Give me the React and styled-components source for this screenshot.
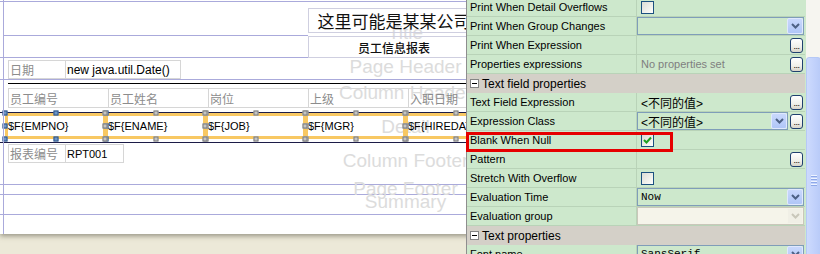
import React from 'react';
import styled, { createGlobalStyle } from 'styled-components';

const Global = createGlobalStyle`
  html, body { margin: 0; padding: 0; }
  body {
    width: 820px; height: 254px; overflow: hidden;
    background: #ece9d8;
    font-family: "Liberation Sans", Arial, sans-serif;
  }
`;

const CJK = `"Liberation Sans", "Noto Sans CJK SC", sans-serif`;

const Root = styled.div`
  position: relative;
  display: flex;
  width: 820px;
  height: 254px;
  overflow: hidden;
`;

/* ---------------- Report designer ---------------- */

const Designer = styled.div`
  flex: none;
  width: 466px;
  height: 254px;
  overflow: hidden;
  background: #ece9d8;
`;

const Page = styled.div`
  position: relative;
  width: 808px;
  height: 234px;
  background: #fff;
  display: flex;
  flex-direction: column;
  box-shadow: 0 2px 5px rgba(95, 92, 75, 0.6);
  &::before {
    content: "";
    position: absolute;
    left: 3px; top: 0; bottom: 0;
    width: 1px;
    background: #aaaadb;
    z-index: 2;
  }
`;

const Band = styled.div`
  position: relative;
  flex: none;
  box-sizing: border-box;
  height: ${p => p.$h}px;
  border-bottom: ${p => (p.$noLine ? 'none' : `1px solid ${p.$line || '#aaaadb'}`)};
`;

const BandLabel = styled.div`
  position: absolute;
  left: 3px; right: 0; top: 0; bottom: 0;
  display: flex;
  align-items: center;
  justify-content: center;
  transform: translateY(${p => -(p.$lift ?? 2)}px);
  font: 19px "Liberation Sans", Arial, sans-serif;
  color: #dcdcdc;
  white-space: nowrap;
  pointer-events: none;
`;

const Layer = styled.div`
  position: relative;
  z-index: 1;
  box-sizing: border-box;
  height: 100%;
  display: flex;
  flex-direction: ${p => p.$dir || 'row'};
  align-items: flex-start;
  padding: ${p => p.$pad || '0'};
  gap: ${p => p.$gap || 0}px;
`;

const Rule = styled.div`
  flex: none;
  width: ${p => p.$w}px;
  height: 1px;
  margin-top: ${p => p.$top || 0}px;
  background: ${p => p.$color || '#000'};
`;

const TitleCol = styled.div`
  display: flex;
  flex-direction: column;
  gap: 3px;
  padding-top: 6px;
`;

const TitleBox = styled.div`
  box-sizing: border-box;
  width: 172px;
  height: ${p => p.$h}px;
  border: 1px solid #cfcfe0;
  display: flex;
  align-items: center;
  justify-content: center;
  white-space: nowrap;
  font-family: "Noto Sans CJK SC", sans-serif;
  font-size: ${p => p.$size}px;
  font-weight: ${p => p.$weight || 400};
  color: #111;
`;

const ElemRow = styled.div`
  display: flex;
  align-items: flex-start;
`;

const Cell = styled.div`
  box-sizing: border-box;
  flex: none;
  width: ${p => p.$w}px;
  height: ${p => p.$h}px;
  margin-left: ${p => (p.$first ? 0 : -1)}px;
  border: 1px solid #d6d6d6;
  padding-left: 1px;
  display: flex;
  align-items: center;
  overflow: hidden;
  white-space: nowrap;
  font-family: ${p => (p.$latin ? '"Liberation Sans", Arial, sans-serif' : CJK)};
  font-size: ${p => p.$size || 12}px;
  color: ${p => (p.$latin ? '#000' : '#8c8c8c')};
`;

const Field = styled.div`
  position: relative;
  box-sizing: border-box;
  flex: none;
  width: 101px;
  height: 26px;
  margin-left: ${p => (p.$first ? 0 : -1)}px;
  border: 3px solid #f8c863;
  display: flex;
  align-items: center;
  white-space: nowrap;
  font: 11px "Liberation Sans", Arial, sans-serif;
  color: #000;
`;

const FieldText = styled.span`
  position: relative;
  z-index: 1;
  margin-left: 0;
`;

const Handle = styled.span`
  position: absolute;
  z-index: 2;
  width: 5px;
  height: 5px;
  box-sizing: border-box;
  border: 1px solid ${p => (p.$primary ? '#2f5488' : '#7d7d7d')};
  background: ${p => (p.$primary ? '#6d96c8' : '#c4c4c4')};
  left: ${p => p.$x};
  top: ${p => p.$y};
  transform: translate(-50%, -50%);
`;

const handleSpots = [
  ['-3px', '-3px'], ['50%', '-3px'], ['calc(100% + 3px)', '-3px'],
  ['-3px', '50%'], ['calc(100% + 3px)', '50%'],
  ['-3px', 'calc(100% + 3px)'], ['50%', 'calc(100% + 3px)'], ['calc(100% + 3px)', 'calc(100% + 3px)'],
];

const columns = ['员工编号', '员工姓名', '岗位', '上级', '入职日期'];
const fields = ['$F{EMPNO}', '$F{ENAME}', '$F{JOB}', '$F{MGR}', '$F{HIREDATE}'];

function ReportPage() {
  return (
    <Page>
      <Band $h={2} />
      <Band $h={56}>
        <BandLabel $lift={-3}>Title</BandLabel>
        <Layer $pad="0 0 0 3px">
          <Rule $w={305} $top={33} $color="#aaaadb" />
          <TitleCol>
            <TitleBox $h={25} $size={17}>这里可能是某某公司</TitleBox>
            <TitleBox $h={22} $size={12} $weight={500}>员工信息报表</TitleBox>
          </TitleCol>
        </Layer>
      </Band>
      <Band $h={22}>
        <BandLabel>Page Header</BandLabel>
        <Layer $pad="2px 0 0 8px">
          <ElemRow>
            <Cell $first $w={58} $h={19}>日期</Cell>
            <Cell $w={116} $h={19} $latin>new java.util.Date()</Cell>
          </ElemRow>
        </Layer>
      </Band>
      <Band $h={33} $line="#1c1c48">
        <BandLabel $lift={3}>Column Header</BandLabel>
        <Layer $dir="column" $gap={4} $pad="3px 0 0 8px">
          <Rule $w={800} />
          <ElemRow>
            {columns.map((c, i) => (
              <Cell key={c} $first={i === 0} $w={101} $h={20}>{c}</Cell>
            ))}
          </ElemRow>
        </Layer>
      </Band>
      <Band $h={30} $line="#1c1c48">
        <BandLabel $lift={1}>Detail</BandLabel>
        <Layer $pad="0 0 0 5px">
          <ElemRow>
            {fields.map((f, i) => (
              <Field key={f} $first={i === 0}>
                <FieldText>{f}</FieldText>
                {handleSpots.map(([x, y], k) => (
                  <Handle key={k} $x={x} $y={y} $primary={i === 0} />
                ))}
              </Field>
            ))}
          </ElemRow>
        </Layer>
      </Band>
      <Band $h={42}>
        <BandLabel $lift={3}>Column Footer</BandLabel>
        <Layer $pad="1px 0 0 8px">
          <ElemRow>
            <Cell $first $w={58} $h={19}>报表编号</Cell>
            <Cell $w={59} $h={19} $latin $size={11}>RPT001</Cell>
          </ElemRow>
        </Layer>
      </Band>
      <Band $h={10}>
        <BandLabel $lift={1}>Page Footer</BandLabel>
      </Band>
      <Band $h={20}>
        <BandLabel $lift={3}>Summary</BandLabel>
      </Band>
      <Band $h={19} $noLine />
    </Page>
  );
}

/* ---------------- Property sheet ---------------- */

const PropPanel = styled.div`
  flex: 1;
  display: flex;
  border-left: 1px solid #8e8e8e;
  background: #cde8cc;
`;

const Sheet = styled.div`
  flex: none;
  width: 338px;
  height: 254px;
  overflow: hidden;
`;

const Rows = styled.div`
  margin-top: -2px;
  display: flex;
  flex-direction: column;
`;

const Row = styled.div`
  flex: none;
  box-sizing: border-box;
  height: 19px;
  display: grid;
  grid-template-columns: 170px 1fr;
  border-bottom: 1px solid #b9d3b8;
  background: #cde8cc;
`;

const NameCell = styled.div`
  border-right: 1px solid #b9d3b8;
  padding-left: 3px;
  display: flex;
  align-items: center;
  font-size: 11px;
  color: #000;
  white-space: nowrap;
  overflow: hidden;
`;

const ValueCell = styled.div`
  display: flex;
  align-items: center;
  gap: 2px;
  padding-right: 1px;
  min-width: 0;
`;

const CategoryRow = styled.div`
  flex: none;
  box-sizing: border-box;
  height: 19px;
  display: flex;
  align-items: center;
  gap: 3px;
  padding-left: 3px;
  background: #d4d0c8;
  font-size: 12px;
  color: #000;
`;

const Toggle = styled.span`
  box-sizing: border-box;
  width: 9px;
  height: 9px;
  border: 1px solid #848484;
  background: #fff;
  position: relative;
  &::after {
    content: "";
    position: absolute;
    left: 1px; right: 1px; top: 3px;
    height: 1px;
    background: #000;
  }
`;

const ValueText = styled.span`
  flex: 1;
  padding-left: 4px;
  white-space: nowrap;
  overflow: hidden;
  font-family: ${p => (p.$mono ? '"Liberation Mono", monospace' : CJK)};
  font-size: ${p => (p.$muted ? 11 : 12)}px;
  color: ${p => (p.$muted ? '#7f7f7f' : '#000')};
`;

const Check = styled.span`
  box-sizing: border-box;
  width: 13px;
  height: 13px;
  margin-left: 4px;
  border: 1px solid #1c5180;
  background: linear-gradient(135deg, #dcdcd5 0%, #f4f4f0 70%, #fff 100%);
  display: flex;
  align-items: center;
  justify-content: center;
`;

const Combo = styled.div`
  box-sizing: border-box;
  flex: 1;
  height: 18px;
  align-self: flex-start;
  display: flex;
  align-items: stretch;
  border: 1px solid ${p => (p.$disabled ? '#c9c7ba' : '#7f9db9')};
  background: ${p => (p.$disabled ? '#f5f4ea' : 'transparent')};
  min-width: 0;
`;

const ComboText = styled.span`
  flex: 1;
  display: flex;
  align-items: center;
  padding-left: 3px;
  white-space: nowrap;
  overflow: hidden;
  font-family: ${p => (p.$mono ? '"Liberation Mono", monospace' : CJK)};
  font-size: ${p => (p.$mono ? 11 : 12)}px;
  color: #000;
`;

const DropBtn = styled.span`
  flex: none;
  width: 16px;
  box-sizing: border-box;
  border: 1px solid ${p => (p.$disabled ? '#f5f4ea' : '#e0e8fe')};
  border-radius: 2px;
  background: ${p => (p.$disabled ? '#f0efe6' : 'linear-gradient(#c9d8fd, #b0c6f7)')};
  display: flex;
  align-items: center;
  justify-content: center;
`;

const DotsBtn = styled.span`
  flex: none;
  box-sizing: border-box;
  width: 13px;
  height: 15px;
  margin-left: auto;
  margin-right: 1px;
  align-self: flex-start;
  margin-top: 2px;
  border: 1px solid #20406f;
  border-radius: 3px;
  background: linear-gradient(#ffffff, #f0f0ea 60%, #d8d4c8);
  display: flex;
  align-items: flex-end;
  justify-content: center;
  font-size: 9px;
  line-height: 9px;
  letter-spacing: -0.5px;
  color: #000;
  padding-bottom: 1px;
`;

const Scrollbar = styled.div`
  flex: none;
  width: 15px;
  margin-left: 1px;
  background: #f6f5f0;
  display: flex;
  flex-direction: column;
`;

const Thumb = styled.div`
  margin-top: 57px;
  flex: 1;
  margin-bottom: -6px;
  border: 1px solid #b6c9f6;
  border-radius: 3px;
  background: linear-gradient(90deg, #cddafd, #c1d1fb 60%, #b9cbf8);
  display: flex;
  flex-direction: column;
  align-items: center;
  padding-top: 117px;
  gap: 1px;
`;

const Grip = styled.span`
  width: 6px;
  height: 1px;
  background: #eef3ff;
  box-shadow: 0 1px 0 #8ea8e8;
  margin-bottom: 1px;
`;

const Highlight = styled.div`
  position: absolute;
  left: 466px;
  top: 132px;
  width: 207px;
  height: 20px;
  box-sizing: border-box;
  border: 3px solid #e60000;
  pointer-events: none;
  z-index: 5;
`;

const Chevron = ({ disabled }) => (
  <svg width="9" height="6" viewBox="0 0 9 6">
    <polyline points="1,1 4.5,4.5 8,1" fill="none" stroke={disabled ? '#c9c7ba' : '#4d6185'} strokeWidth="2" />
  </svg>
);

const Tick = () => (
  <svg width="9" height="8" viewBox="0 0 9 8">
    <polyline points="1,4 3.5,6.5 8,1.5" fill="none" stroke="#21a121" strokeWidth="2" />
  </svg>
);

const props = [
  { name: 'Print When Detail Overflows', v: { type: 'check' } },
  { name: 'Print When Group Changes', v: { type: 'combo', text: '' } },
  { name: 'Print When Expression', v: { type: 'dots' } },
  { name: 'Properties expressions', v: { type: 'text', text: 'No properties set', muted: true, dots: true } },
  { category: 'Text field properties' },
  { name: 'Text Field Expression', v: { type: 'text', text: '<不同的值>', dots: true } },
  { name: 'Expression Class', v: { type: 'combo', text: '<不同的值>', dots: true } },
  { name: 'Blank When Null', v: { type: 'check', checked: true } },
  { name: 'Pattern', v: { type: 'dots' } },
  { name: 'Stretch With Overflow', v: { type: 'check' } },
  { name: 'Evaluation Time', v: { type: 'combo', text: 'Now', mono: true } },
  { name: 'Evaluation group', v: { type: 'combo', text: '', disabled: true } },
  { category: 'Text properties' },
  { name: 'Font name', v: { type: 'combo', text: 'SansSerif', mono: true } },
];

function Value({ v }) {
  if (v.type === 'check') {
    return <ValueCell><Check>{v.checked && <Tick />}</Check></ValueCell>;
  }
  if (v.type === 'dots') {
    return <ValueCell><DotsBtn>...</DotsBtn></ValueCell>;
  }
  if (v.type === 'text') {
    return (
      <ValueCell>
        <ValueText $muted={v.muted}>{v.text}</ValueText>
        {v.dots && <DotsBtn>...</DotsBtn>}
      </ValueCell>
    );
  }
  return (
    <ValueCell>
      <Combo $disabled={v.disabled}>
        <ComboText $mono={v.mono}>{v.text}</ComboText>
        <DropBtn $disabled={v.disabled}><Chevron disabled={v.disabled} /></DropBtn>
      </Combo>
      {v.dots && <DotsBtn>...</DotsBtn>}
    </ValueCell>
  );
}

function PropertySheet() {
  return (
    <PropPanel>
      <Sheet>
        <Rows>
          {props.map((p, i) =>
            p.category ? (
              <CategoryRow key={i}><Toggle />{p.category}</CategoryRow>
            ) : (
              <Row key={i}>
                <NameCell>{p.name}</NameCell>
                <Value v={p.v} />
              </Row>
            )
          )}
        </Rows>
      </Sheet>
      <Scrollbar>
        <Thumb>
          <Grip /><Grip /><Grip /><Grip />
        </Thumb>
      </Scrollbar>
    </PropPanel>
  );
}

export default function App() {
  return (
    <>
      <Global />
      <Root>
        <Designer>
          <ReportPage />
        </Designer>
        <PropertySheet />
        <Highlight />
      </Root>
    </>
  );
}
